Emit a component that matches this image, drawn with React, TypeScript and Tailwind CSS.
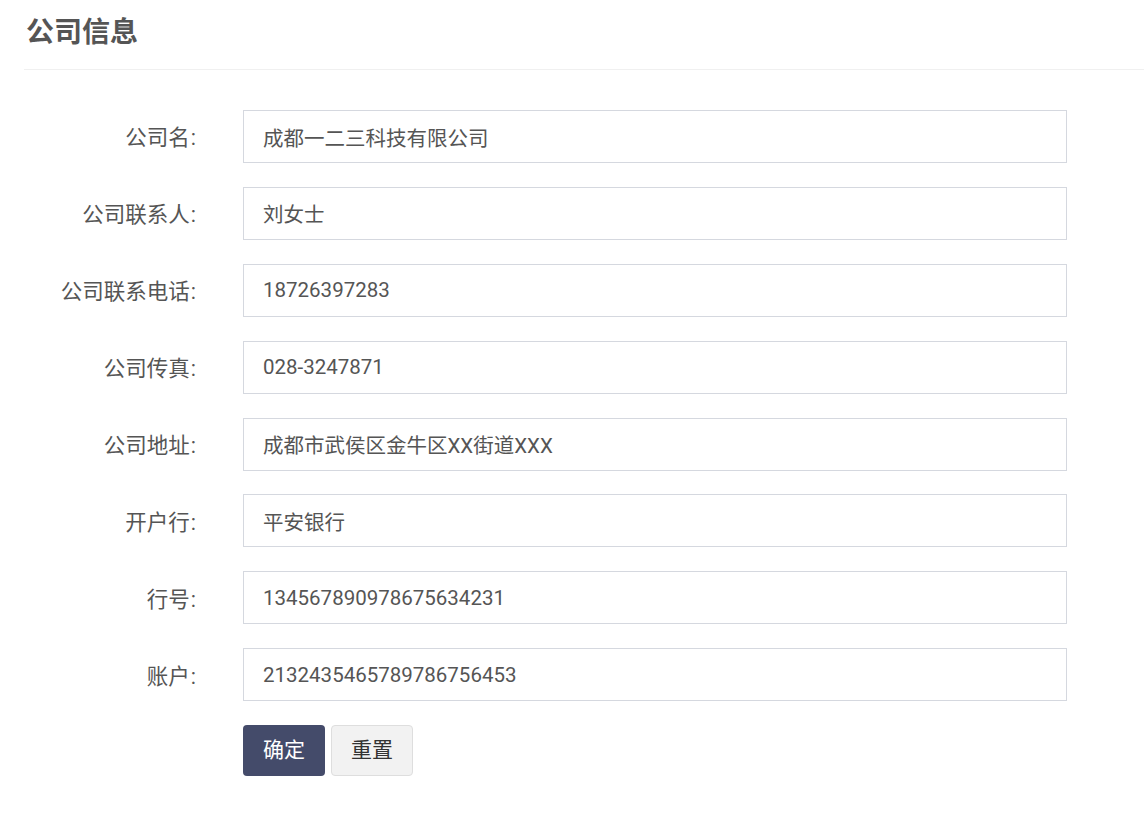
const FIELDS: { label: string; value: string }[] = [
  { label: "公司名", value: "成都一二三科技有限公司" },
  { label: "公司联系人", value: "刘女士" },
  { label: "公司联系电话", value: "18726397283" },
  { label: "公司传真", value: "028-3247871" },
  { label: "公司地址", value: "成都市武侯区金牛区XX街道XXX" },
  { label: "开户行", value: "平安银行" },
  { label: "行号", value: "134567890978675634231" },
  { label: "账户", value: "2132435465789786756453" },
];

const FONT = "font-['Roboto','Noto_Sans_CJK_SC',sans-serif]";

export default function App() {
  return (
    <div className={`min-h-[816px] w-[1144px] bg-white text-[#555] ${FONT}`}>
      <div className="pl-[24px]">
        <h1 className="h-[69px] pl-[2px] pt-[14px] text-[28px] font-bold leading-[38px] text-[#555]">公司信息</h1>
        <div className="h-px bg-[#f0f0f0]" />
      </div>

      <form className="mt-[40px] flex flex-col gap-[23.9px]" onSubmit={(e) => e.preventDefault()}>
        {FIELDS.map((f) => (
          <div key={f.label} className="flex items-center">
            <label className="w-[196px] pt-[4px] text-right text-[21.5px] text-[#555]">
              {f.label}
              <span className="ml-[1px]">:</span>
            </label>
            <input
              defaultValue={f.value}
              className="ml-[47px] h-[53px] w-[824px] border border-[#d5d8df] bg-white px-[19px] text-[20.5px] text-[#555] outline-none"
            />
          </div>
        ))}
        <div className="flex gap-[6px] pl-[243px]">
          <button type="submit" className="h-[51px] w-[82px] rounded-[4px] bg-[#444b6a] text-[21px] text-white">
            确定
          </button>
          <button type="reset" className="h-[51px] w-[82px] rounded-[4px] border border-[#dedede] bg-[#f2f2f2] text-[21px] text-[#333]">
            重置
          </button>
        </div>
      </form>
    </div>
  );
}
